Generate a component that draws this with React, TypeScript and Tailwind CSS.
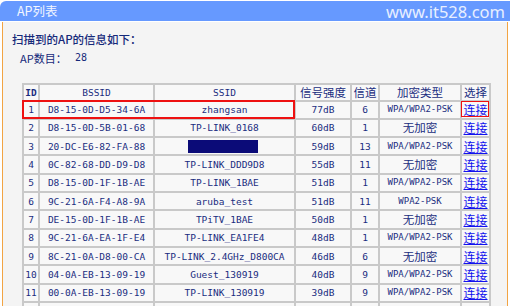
const rows = [
  { id: "1", bssid: "D8-15-0D-D5-34-6A", ssid: "zhangsan", sig: "77dB", ch: "6", enc: "WPA/WPA2-PSK" },
  { id: "2", bssid: "D8-15-0D-5B-01-68", ssid: "TP-LINK_0168", sig: "60dB", ch: "1", enc: "无加密" },
  { id: "3", bssid: "20-DC-E6-82-FA-88", ssid: "", sig: "59dB", ch: "13", enc: "WPA/WPA2-PSK" },
  { id: "4", bssid: "0C-82-68-DD-D9-D8", ssid: "TP-LINK_DDD9D8", sig: "55dB", ch: "11", enc: "无加密" },
  { id: "5", bssid: "D8-15-0D-1F-1B-AE", ssid: "TP-LINK_1BAE", sig: "51dB", ch: "1", enc: "WPA/WPA2-PSK" },
  { id: "6", bssid: "9C-21-6A-F4-A8-9A", ssid: "aruba_test", sig: "51dB", ch: "11", enc: "WPA2-PSK" },
  { id: "7", bssid: "DE-15-0D-1F-1B-AE", ssid: "TPiTV_1BAE", sig: "50dB", ch: "1", enc: "无加密" },
  { id: "8", bssid: "9C-21-6A-EA-1F-E4", ssid: "TP-LINK_EA1FE4", sig: "48dB", ch: "1", enc: "WPA/WPA2-PSK" },
  { id: "9", bssid: "8C-21-0A-D8-00-CA", ssid: "TP-LINK_2.4GHz_D800CA", sig: "46dB", ch: "6", enc: "无加密" },
  { id: "10", bssid: "04-0A-EB-13-09-19", ssid: "Guest_130919", sig: "40dB", ch: "9", enc: "WPA/WPA2-PSK" },
  { id: "11", bssid: "00-0A-EB-13-09-19", ssid: "TP-LINK_130919", sig: "39dB", ch: "9", enc: "WPA/WPA2-PSK" },
]

const cjk = "font-['Noto_Sans_CJK_SC',sans-serif]"
const mono = "font-['DejaVu_Sans_Mono',monospace]"
const cell = "border border-[#c9c9c9] p-0 text-center align-middle whitespace-nowrap overflow-hidden leading-[13px]"

export default function App() {
  return (
    <div className="w-[510px] h-[306px] bg-white overflow-hidden flex flex-col">
      {/* title bar */}
      <div className="mt-px h-[21px] bg-[#6699ff] rounded-tl-[6px] flex items-center justify-between pl-[17px] pr-[5px]">
        <span className={`${cjk} text-[12.5px] text-[#f2f6ff] leading-none`}>AP列表</span>
        <span className="font-['Noto_Sans',sans-serif] text-[16.5px] text-[#e8efff] leading-none mt-[3px]">
          www.it528.com
        </span>
      </div>

      {/* body */}
      <div className="mt-px mx-[2px] flex-1 bg-[#f4f4f4] border-l border-r border-[#f2a443] pt-[9px]">
        <div className={`${cjk} ml-[9px] h-[16px] leading-[16px] text-[11.5px] font-medium text-[#15297a]`}>
          扫描到的AP的信息如下：
        </div>
        <div className={`${cjk} ml-[17px] mt-[3px] h-[16px] leading-[16px] text-[11px] text-[#15297a] flex`}>
          <span className="w-[55px]">AP数目：</span>
          <span className={`${mono} text-[10px]`}>28</span>
        </div>

        <div className="relative ml-[19px] mt-[17px] w-[467px]">
          <table className="w-[467px] table-fixed border-separate border-spacing-0 border border-[#c9c9c9] bg-[#f8f8f8] text-[#1a2d80]">
            <colgroup>
              <col className="w-[16px]" />
              <col className="w-[115px]" />
              <col className="w-[141px]" />
              <col className="w-[56px]" />
              <col className="w-[28px]" />
              <col className="w-[82px]" />
              <col className="w-[29px]" />
            </colgroup>
            <thead>
              <tr>
                <th className={`${cell} ${mono} h-[17px] text-[9.5px] font-bold`}>ID</th>
                <th className={`${cell} ${mono} text-[9.5px] font-normal`}>BSSID</th>
                <th className={`${cell} ${mono} text-[9.5px] font-normal`}>SSID</th>
                <th className={`${cell} ${cjk} text-[11.5px] font-normal`}>信号强度</th>
                <th className={`${cell} ${cjk} text-[11.5px] font-normal`}>信道</th>
                <th className={`${cell} ${cjk} text-[11.5px] font-normal`}>加密类型</th>
                <th className={`${cell} ${cjk} text-[11.5px] font-normal`}>选择</th>
              </tr>
            </thead>
            <tbody>
              {rows.map((r) => (
                <tr key={r.id}>
                  <td className={`${cell} ${mono} h-[18.33px] text-[9.5px]`}>{r.id}</td>
                  <td className={`${cell} ${mono} text-[9.5px]`}>{r.bssid}</td>
                  <td className={`${cell} ${mono} text-[9.5px]`}>
                    {r.ssid === "" ? (
                      <div className="ml-[33px] h-[13px] w-[70px] bg-[#0b0b78]" />
                    ) : (
                      r.ssid
                    )}
                  </td>
                  <td className={`${cell} ${mono} text-[9.5px]`}>{r.sig}</td>
                  <td className={`${cell} ${mono} text-[9.5px]`}>{r.ch}</td>
                  <td className={`${cell} ${r.enc === "无加密" ? `${cjk} text-[11.5px]` : `${mono} text-[9px]`}`}>
                    {r.enc}
                  </td>
                  <td className={`${cell} ${cjk} text-[12px]`}>
                    <a className="text-[#1111ee] underline">连接</a>
                  </td>
                </tr>
              ))}
              <tr>
                <td className={`${cell} h-[18.33px]`} />
                <td className={cell} />
                <td className={cell} />
                <td className={cell} />
                <td className={cell} />
                <td className={cell} />
                <td className={cell} />
              </tr>
            </tbody>
          </table>

          {/* highlight boxes */}
          <div className="absolute left-0 top-[17px] w-[273px] h-[19px] border-2 border-[#ee1111]" />
          <div className="absolute left-[439px] top-[18px] w-[28px] h-[16px] border-[1.5px] border-[#ee1111]" />
        </div>
      </div>
    </div>
  )
}
